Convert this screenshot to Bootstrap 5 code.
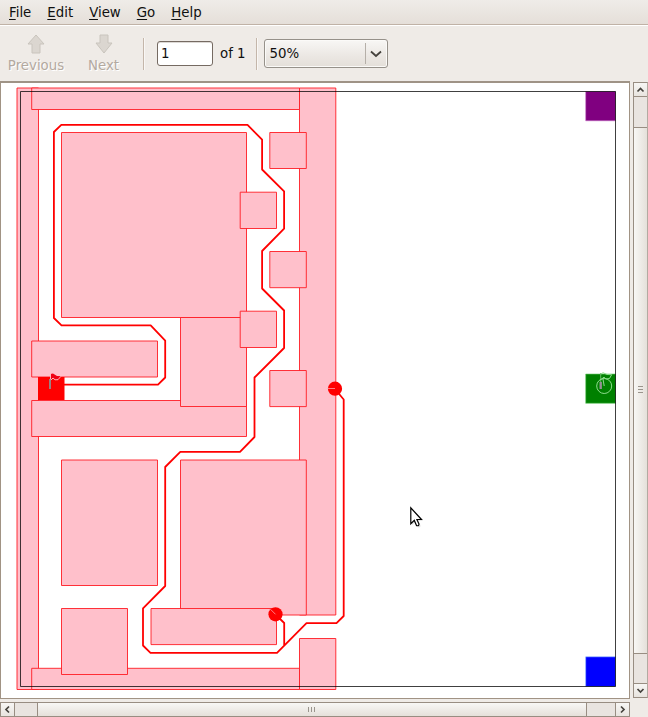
<!DOCTYPE html>
<html lang="en">
<head>
<meta charset="utf-8">
<title>Document Viewer</title>
<link href="https://cdn.jsdelivr.net/npm/bootstrap@5.3.0/dist/css/bootstrap.min.css" rel="stylesheet">
<style>
body{width:648px;height:717px;background:#efebe7;font:13.33px/16px "DejaVu Sans",sans-serif;color:#101010;overflow:hidden}
svg{display:block}
.menu-strip{height:25px;background:linear-gradient(#efece8,#e5dfd9);border-bottom:1px solid #c0b2a6;padding:1px 0 0 9px;gap:16px}
.menu-strip a{color:#101010;text-decoration:none}
.menu-strip u{text-underline-offset:2px}
.tools{height:56px;border-top:1px solid #fff;padding-left:8px}
.tool{border:0;background:none;color:#b3a99f;text-shadow:1px 1px #fff;padding:0;width:56px;height:39px}
.tool span{margin-bottom:-1px}
.tool.next{margin:0 11px 0 12px}
.tool.next span{margin-left:-1px}
.rule{width:1px;height:32px;background:#c4b6aa;box-shadow:1px 0 #f9f7f5}
.page-box{width:56px;height:25px;border:1px solid #756a62;border-radius:3px;background:#fff;padding:0 3px;margin:0 7px 0 13px;font:inherit;color:#101010;box-shadow:inset 0 1px #ddd9d5}
.rule.second{margin:0 7px 0 10px}
.zoom-box{width:124px;height:29px;border:1px solid #96918a;border-radius:3px;background:linear-gradient(#f8f7f5,#ebe7e3 60%,#e4dfd9);padding-left:5px;box-shadow:inset 0 0 0 1px #fbfaf8}
.zoom-box span{width:95px}
.zoom-box i{width:1px;height:21px;background:#b5afa8}
.zoom-box svg{margin-left:3px}
.page-view{width:630px;height:618px;border:1px solid #a19384;border-top:2px solid #9f9386;background:#fff}
.vbar{width:15px;height:616px;margin:1px 0 0 3px;border:1px solid #988d82;border-right-color:#b3aaa1;background:#e9e4e0}
.hbar{width:630px;height:15px;margin-top:3px;border:1px solid #988d82;background:#e9e4e0}
.arrow{background:linear-gradient(#f7f6f4,#e8e4df)}
.vbar .arrow{width:13px;height:14px}
.vbar .arrow.first{border-bottom:1px solid #988d82}
.vbar .arrow.last{border-top:1px solid #988d82}
.hbar .arrow{width:14px;height:13px}
.hbar .arrow.first{border-right:1px solid #988d82}
.hbar .arrow.last{border-left:1px solid #988d82}
.vthumb{height:527px;margin-top:30px;border:solid #988d82;border-width:1px 0;background:linear-gradient(90deg,#f8f7f5,#e5e0da)}
.hthumb{width:550px;margin-left:22px;border:solid #988d82;border-width:0 1px;background:linear-gradient(#f8f7f5,#e5e0da)}
.hthumb svg{margin-right:2px}
.vthumb svg{margin-bottom:4px}
</style>
<script src="https://cdn.jsdelivr.net/npm/bootstrap@5.3.0/dist/js/bootstrap.bundle.min.js"></script>
</head>
<body class="d-flex flex-column">
<nav class="menu-strip d-flex align-items-center flex-shrink-0">
<a href="#"><u>F</u>ile</a><a href="#"><u>E</u>dit</a><a href="#"><u>V</u>iew</a><a href="#"><u>G</u>o</a><a href="#"><u>H</u>elp</a>
</nav>
<div class="tools d-flex align-items-center flex-shrink-0">
<button class="tool d-flex flex-column align-items-center justify-content-between" type="button" disabled>
<svg width="18" height="20"><path d="M9 1L17 10H13V19H5V10H1Z" fill="#dbd6d0" stroke="#c9c4bd"/></svg><span>Previous</span></button>
<button class="tool next d-flex flex-column align-items-center justify-content-between" type="button" disabled>
<svg width="18" height="20"><path d="M5 1H13V9H17L9 19L1 9H5Z" fill="#dbd6d0" stroke="#c9c4bd"/></svg><span>Next</span></button>
<div class="rule"></div>
<input class="page-box" value="1" aria-label="Page">
<span class="of-label">of 1</span>
<div class="rule second"></div>
<div class="zoom-box d-flex align-items-center"><span>50%</span><i></i>
<svg width="14" height="10"><path d="M2 2.5L7 7L12 2.5" fill="none" stroke="#45423d" stroke-width="1.8"/></svg></div>
</div>
<div class="d-flex flex-shrink-0">
<main class="page-view">
<svg width="628" height="615" viewBox="1 83 628 615">
<g fill="#ffc0cb" stroke="#ff1c24" stroke-width=".9">
<path d="M17 88H38.5V689.500H17Z"/>
<path d="M299.500 88H335.800V615H299.500Z"/>
<path d="M31.700 88H299.500V109.500H31.700Z"/>
<path d="M31.700 668.300H299.500V689.500H31.700Z"/>
<path d="M299.500 638.500H335.800V689.500H299.500Z"/>
<path d="M61.500 132.500H246.500V317.500H61.500Z"/>
<path d="M31.700 400.500H246.500V436.500H31.700Z"/>
<path d="M180.500 317.500H246.500V406.500H180.500Z"/>
<path d="M31.700 341H157.500V377H31.700Z"/>
<path d="M269.800 132.500H306.300V168.500H269.800Z"/>
<path d="M240.200 192.200H276.500V228.500H240.200Z"/>
<path d="M269.800 251.500H306.300V287.700H269.800Z"/>
<path d="M240.200 311.200H276.500V347.500H240.200Z"/>
<path d="M269.800 370.500H306.300V406.600H269.800Z"/>
<path d="M61.500 460H157.500V585.500H61.500Z"/>
<path d="M180.500 460H306.300V615H180.500Z"/>
<path d="M151 608.500H276.500V644.600H151Z"/>
<path d="M61.500 608.500H127.500V674.500H61.500Z"/>
</g>
<path d="M38 377H64.500V400H38Z" fill="red"/>
<path d="M585.700 91.500H615.500V120.800H585.700Z" fill="#800080" stroke="#c97ac9" stroke-width=".6"/>
<path d="M585.700 374H615.500V403.300H585.700Z" fill="#008000" stroke="#6fce6f" stroke-width=".6"/>
<path d="M585.700 656.800H615.500V686.500H585.700Z" fill="#00f" stroke="#8ab6ff" stroke-width=".6"/>
<g fill="none" stroke="red" stroke-width="1.8" stroke-linejoin="round">
<path d="M64 384.700H158L165.200 377.500V340.700L150.700 325.300H61.500L53.900 318V132L61.300 124.800H247.500L262.100 139.700V169.500L284.100 191.300V228.700L262.100 251V288.500L284.100 310.500V348L254.500 377.500V437L240 451.900H180.300L165.200 467V586L143 608.300V645.500L150.500 652.800H277L306.500 623.200H336.500L343.700 616V399.500L335 389"/>
<path d="M284.200 645V623L275.500 614.500"/>
</g>
<path d="M20.500 91.500H615.500V686.500H20.500Z" fill="none" stroke="#000" stroke-opacity=".75"/>
<circle cx="335" cy="388.700" r="7.100" fill="red"/>
<circle cx="275.500" cy="614.300" r="7.100" fill="red"/>
<path d="M328 388.500H335M270.500 609.300L275.500 614.300" stroke="#ff8c93" stroke-width=".9"/>
<path d="M50.500 380V374L53 373.500L57 376L61 376.200L58 379.700L55 379.800L53 378L50.500 380.500" fill="#f00014"/>
<path d="M50.500 380.500L53 378L55 379.800L58 379.700L61 376.200M50.500 380V374" fill="none" stroke="#ffc4ca" stroke-width=".9"/>
<path d="M50 379V389" stroke="#909090" stroke-width="1.800"/>
<path d="M600.700 373V382" stroke="#65bb65"/>
<path d="M600.700 382V389" stroke="#969096" stroke-width="2.400"/>
<g fill="none" stroke="#8ddc8d" stroke-width="1"><circle cx="604.200" cy="386" r="7.500"/><path d="M604.200 386L602.800 378M601 374L603 372.700L607 374.500L611.700 374.700L609.500 378.500L606 379L604 377.200L601 379.500"/></g>
<path d="M411 508V524L414.700 520.600L417 526.300Q419.800 527 419.500 524.500L417.500 519.700H422Z" fill="#888" opacity=".25" transform="translate(1 1)"/>
<path d="M410.800 507.800V523.800L414.300 520.400L416.500 525.600Q419.200 526.300 418.900 523.800L416.900 519.500H421.500Z" fill="#fff" stroke="#000" stroke-width="1.200"/>
</svg>
</main>
<div class="vbar d-flex flex-column">
<div class="arrow first"><svg width="13" height="13"><path d="M3.500 8.500L6.500 5.500L9.500 8.500" fill="none" stroke="#45423d" stroke-width="1.700"/></svg></div>
<div class="vthumb d-flex align-items-center justify-content-center"><svg width="7" height="8"><path d="M1 1.500H6M1 4.500H6M1 7.500H6" stroke="#9a948c"/></svg></div>
<div class="arrow last mt-auto"><svg width="13" height="13"><path d="M3.500 5L6.500 8L9.500 5" fill="none" stroke="#45423d" stroke-width="1.700"/></svg></div>
</div>
</div>
<div class="hbar d-flex flex-shrink-0">
<div class="arrow first"><svg width="13" height="13"><path d="M8 3.500L5 6.500L8 9.500" fill="none" stroke="#45423d" stroke-width="1.700"/></svg></div>
<div class="hthumb d-flex align-items-center justify-content-center"><svg width="8" height="7"><path d="M1.500 1V6M4.500 1V6M7.500 1V6" stroke="#9a948c"/></svg></div>
<div class="arrow last ms-auto"><svg width="13" height="13"><path d="M5 3.500L8 6.500L5 9.500" fill="none" stroke="#45423d" stroke-width="1.700"/></svg></div>
</div>
</body>
</html>
